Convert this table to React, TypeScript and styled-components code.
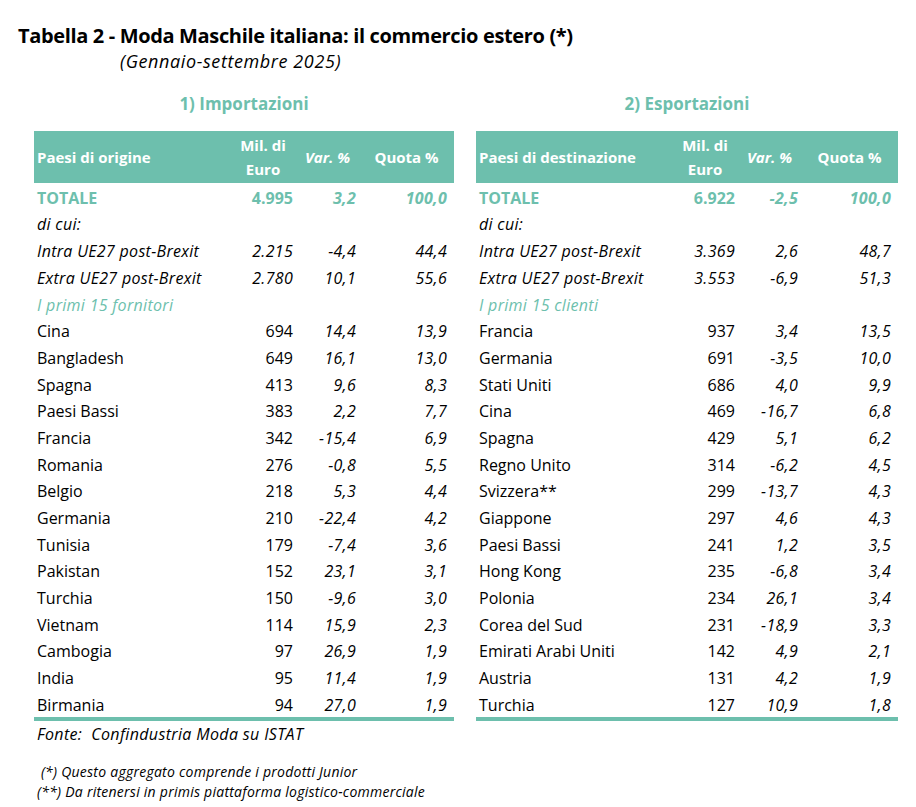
import styled, { createGlobalStyle } from 'styled-components';

const teal = '#6dbfad';

type Riga = [string, string, string, string];

const importazioni: Riga[] = [
  ['Cina', '694', '14,4', '13,9'],
  ['Bangladesh', '649', '16,1', '13,0'],
  ['Spagna', '413', '9,6', '8,3'],
  ['Paesi Bassi', '383', '2,2', '7,7'],
  ['Francia', '342', '-15,4', '6,9'],
  ['Romania', '276', '-0,8', '5,5'],
  ['Belgio', '218', '5,3', '4,4'],
  ['Germania', '210', '-22,4', '4,2'],
  ['Tunisia', '179', '-7,4', '3,6'],
  ['Pakistan', '152', '23,1', '3,1'],
  ['Turchia', '150', '-9,6', '3,0'],
  ['Vietnam', '114', '15,9', '2,3'],
  ['Cambogia', '97', '26,9', '1,9'],
  ['India', '95', '11,4', '1,9'],
  ['Birmania', '94', '27,0', '1,9'],
];

const esportazioni: Riga[] = [
  ['Francia', '937', '3,4', '13,5'],
  ['Germania', '691', '-3,5', '10,0'],
  ['Stati Uniti', '686', '4,0', '9,9'],
  ['Cina', '469', '-16,7', '6,8'],
  ['Spagna', '429', '5,1', '6,2'],
  ['Regno Unito', '314', '-6,2', '4,5'],
  ['Svizzera**', '299', '-13,7', '4,3'],
  ['Giappone', '297', '4,6', '4,3'],
  ['Paesi Bassi', '241', '1,2', '3,5'],
  ['Hong Kong', '235', '-6,8', '3,4'],
  ['Polonia', '234', '26,1', '3,4'],
  ['Corea del Sud', '231', '-18,9', '3,3'],
  ['Emirati Arabi Uniti', '142', '4,9', '2,1'],
  ['Austria', '131', '4,2', '1,9'],
  ['Turchia', '127', '10,9', '1,8'],
];

const GlobalStyle = createGlobalStyle`
  body {
    margin: 0;
    background: #fff;
    color: #000;
    font-family: "Open Sans", "Noto Sans", sans-serif;
  }
`;

const Pagina = styled.div`
  width: 916px;
  height: 807px;
  padding-top: 24px;
  box-sizing: border-box;
`;

const Titolo = styled.h1`
  margin: 0 0 0 18px;
  font-size: 20px;
  line-height: 24px;
  font-weight: 700;
  letter-spacing: -0.35px;
`;

const Sottotitolo = styled.div`
  margin: 1px 0 0 120px;
  font-size: 18px;
  line-height: 24px;
  font-style: italic;
  letter-spacing: 0.6px;
`;

const Tabelle = styled.div`
  display: grid;
  grid-template-columns: 420px 422px;
  column-gap: 22px;
  margin: 19px 0 0 34px;
`;

const Sezione = styled.div`
  display: flex;
  flex-direction: column;
`;

const TitoloSezione = styled.div`
  text-align: center;
  color: ${teal};
  font-size: 17px;
  font-weight: 700;
  line-height: 24px;
  margin-bottom: 15px;
`;

const Griglia = styled.div`
  display: grid;
  grid-template-columns: 196px 66px 63px 1fr;
  border-bottom: 4px solid ${teal};
`;

const Intestazione = styled.div<{ $allinea?: string; $corsivo?: boolean }>`
  background: ${teal};
  color: #fff;
  font-weight: 700;
  font-size: 15px;
  line-height: 24px;
  height: 52px;
  display: flex;
  flex-direction: column;
  justify-content: center;
  align-items: ${(p) => p.$allinea || 'center'};
  text-align: center;
  font-style: ${(p) => (p.$corsivo ? 'italic' : 'normal')};
  padding-left: ${(p) => (p.$allinea ? '3px' : '0')};
`;

const Cella = styled.div<{ $destra?: boolean; $ultima?: boolean; $corsivo?: boolean; $grassetto?: boolean; $colore?: string }>`
  box-sizing: border-box;
  height: 26.7px;
  padding-top: 3.8px;
  line-height: 22px;
  font-size: 16px;
  white-space: nowrap;
  text-align: ${(p) => (p.$destra ? 'right' : 'left')};
  padding-right: ${(p) => (p.$ultima ? '7px' : p.$destra ? '3px' : '0')};
  padding-left: ${(p) => (p.$destra ? '0' : '3px')};
  font-style: ${(p) => (p.$corsivo ? 'italic' : 'normal')};
  letter-spacing: ${(p) => (p.$corsivo ? '0.3px' : '0')};
  font-weight: ${(p) => (p.$grassetto ? 700 : 400)};
  color: ${(p) => p.$colore || '#000'};
`;

const Fonte = styled.div`
  margin: 2px 0 0 3px;
  font-size: 16px;
  line-height: 22px;
  font-style: italic;
  letter-spacing: 0.35px;
`;

const Note = styled.div`
  margin: 17px 0 0 3px;
  font-size: 14px;
  line-height: 20px;
  font-style: italic;
  letter-spacing: 0.25px;
`;

interface TabellaProps {
  titolo: string;
  colonnaPaesi: string;
  totale: Riga;
  intra: Riga;
  extra: Riga;
  primi: string;
  righe: Riga[];
}

function Tabella(props: TabellaProps) {
  const { titolo, colonnaPaesi, totale, intra, extra, primi, righe } = props;
  return (
    <Sezione>
      <TitoloSezione>{titolo}</TitoloSezione>
      <Griglia>
        <Intestazione $allinea="flex-start">{colonnaPaesi}</Intestazione>
        <Intestazione>
          <span>Mil. di</span>
          <span>Euro</span>
        </Intestazione>
        <Intestazione $corsivo>Var. %</Intestazione>
        <Intestazione>Quota %</Intestazione>

        <Cella $grassetto $colore={teal}>{totale[0]}</Cella>
        <Cella $destra $grassetto $colore={teal}>{totale[1]}</Cella>
        <Cella $destra $grassetto $corsivo $colore={teal}>{totale[2]}</Cella>
        <Cella $destra $ultima $grassetto $corsivo $colore={teal}>{totale[3]}</Cella>

        <Cella $corsivo>di cui:</Cella>
        <Cella />
        <Cella />
        <Cella />

        {[intra, extra].map((r) => (
          <>
            <Cella $corsivo key={r[0]}>{r[0]}</Cella>
            <Cella $destra $corsivo>{r[1]}</Cella>
            <Cella $destra $corsivo>{r[2]}</Cella>
            <Cella $destra $ultima $corsivo>{r[3]}</Cella>
          </>
        ))}

        <Cella $corsivo $colore={teal}>{primi}</Cella>
        <Cella />
        <Cella />
        <Cella />

        {righe.map((r) => (
          <>
            <Cella key={r[0]}>{r[0]}</Cella>
            <Cella $destra>{r[1]}</Cella>
            <Cella $destra $corsivo>{r[2]}</Cella>
            <Cella $destra $ultima $corsivo>{r[3]}</Cella>
          </>
        ))}
      </Griglia>
    </Sezione>
  );
}

export default function App() {
  return (
    <Pagina>
      <GlobalStyle />
      <Titolo>Tabella 2 - Moda Maschile italiana: il commercio estero (*)</Titolo>
      <Sottotitolo>(Gennaio-settembre 2025)</Sottotitolo>
      <Tabelle>
        <div>
          <Tabella
            titolo="1) Importazioni"
            colonnaPaesi="Paesi di origine"
            totale={['TOTALE', '4.995', '3,2', '100,0']}
            intra={['Intra UE27 post-Brexit', '2.215', '-4,4', '44,4']}
            extra={['Extra UE27 post-Brexit', '2.780', '10,1', '55,6']}
            primi="I primi 15 fornitori"
            righe={importazioni}
          />
          <Fonte>Fonte:&nbsp; Confindustria Moda su ISTAT</Fonte>
          <Note>
            <div>&nbsp;(*) Questo aggregato comprende i prodotti Junior</div>
            <div>(**) Da ritenersi in primis piattaforma logistico-commerciale</div>
          </Note>
        </div>
        <Tabella
          titolo="2) Esportazioni"
          colonnaPaesi="Paesi di destinazione"
          totale={['TOTALE', '6.922', '-2,5', '100,0']}
          intra={['Intra UE27 post-Brexit', '3.369', '2,6', '48,7']}
          extra={['Extra UE27 post-Brexit', '3.553', '-6,9', '51,3']}
          primi="I primi 15 clienti"
          righe={esportazioni}
        />
      </Tabelle>
    </Pagina>
  );
}
